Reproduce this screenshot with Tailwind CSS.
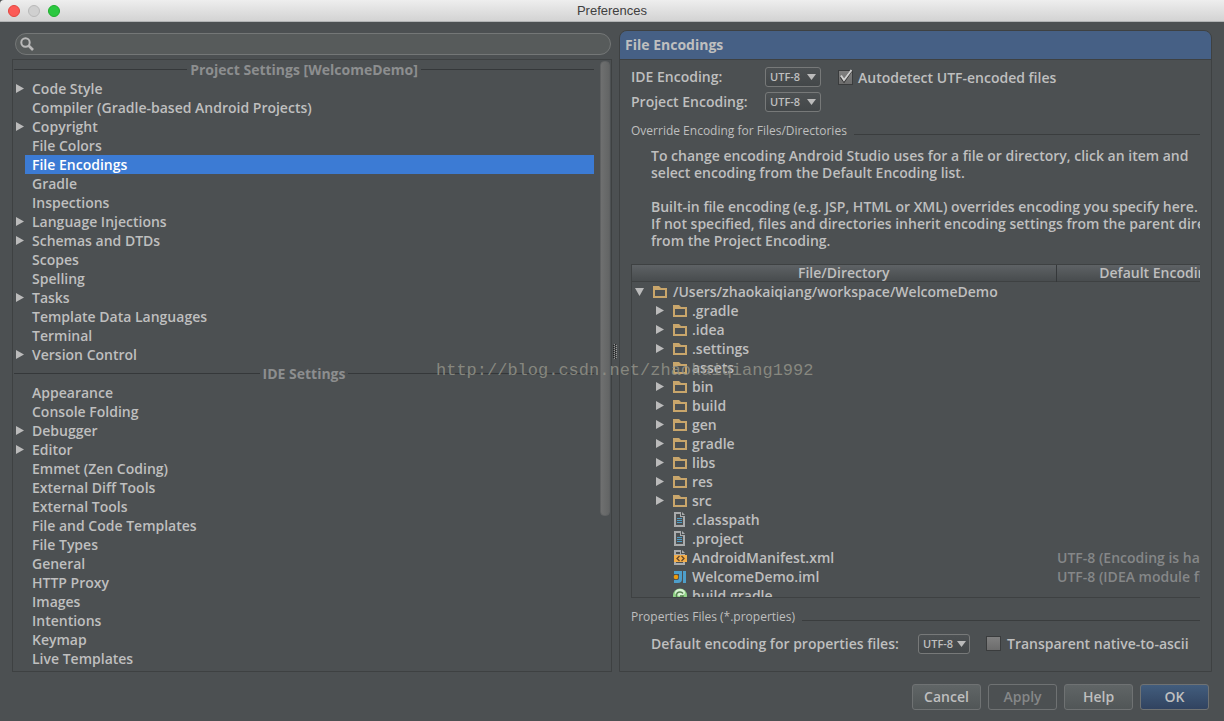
<!DOCTYPE html>
<html lang="en">
<head>
    <meta charset="UTF-8">
    <meta name="viewport" content="width=device-width, initial-scale=1.0">
    <title>Preferences</title>
    <script src="https://cdn.jsdelivr.net/npm/@tailwindcss/browser@4"></script>
</head>
<body class="bg-[#4c5052] text-[#bfbfbf] font-['Open_Sans','Noto_Sans',sans-serif] text-[14px] font-semibold">

    <!-- Shared icons -->
    <svg class="hidden">
        <symbol id="arrow-right" viewBox="0 0 8 9"><path d="M0 0L8 4.5L0 9Z" fill="#bbb"/></symbol>
        <symbol id="arrow-down" viewBox="0 0 9 8"><path d="M0 0H9L4.5 8Z" fill="#bbb"/></symbol>
        <symbol id="folder" viewBox="0 0 14 12"><path fill="#c9a66b" fill-rule="evenodd" d="M0 0H6L8 2H14V12H0ZM2 4V10H12V4Z"/></symbol>
        <symbol id="file" viewBox="0 0 14 15">
            <path fill="#a9abac" fill-rule="evenodd" d="M1 0H8V4H12V15H1ZM3 2V13H10V5H7V2Z"/>
            <path fill="#a9abac" d="M9 0L12 3H9Z"/>
            <path stroke="#4f9cc4" d="M4 6.5H9M4 8.5H9M4 10.5H9"/>
        </symbol>
        <symbol id="xml" viewBox="0 0 14 15">
            <path fill="#a9abac" d="M1 0H8V4H12V5H1ZM1 12H12V15H1Z"/>
            <path fill="#4c5052" d="M3 2H7V4H3ZM3 12H10V13H3Z"/>
            <path fill="#a9abac" d="M9 0L12 3H9Z"/>
            <path fill="#f4ae49" d="M1 5H14V12H1Z"/>
            <path fill="none" stroke="#62462a" stroke-width="1.3" d="M6.5 6L4 8.5L6.5 11M8.5 6L11 8.5L8.5 11"/>
        </symbol>
        <symbol id="module" viewBox="0 0 14 15">
            <path fill="#4e9fcb" d="M1 2H9V10Q9 14 5 14H1V11H4Q6 11 6 9V5H1ZM10 2H13V14H10Z"/>
            <circle cx="3" cy="8" r="2.3" fill="#ec9b0d"/>
        </symbol>
        <symbol id="gradle" viewBox="0 0 14 15">
            <circle cx="7" cy="7.5" r="7" fill="#93d689"/>
            <ellipse cx="7" cy="4.5" rx="5" ry="3.5" fill="#d8f2d3"/>
            <path fill="none" stroke="#55804f" stroke-width="1.5" d="M10 5.5Q9 4 7 4Q3.500 4 3.500 7.500Q3.500 11 7 11Q10 11 10 8H7"/>
        </symbol>
    </svg>

    <div class="h-screen flex flex-col overflow-hidden">
        <!-- Title bar -->
        <header class="relative h-[22px] shrink-0 flex items-center px-2 gap-2 bg-linear-to-b from-[#eeeeee] to-[#d3d3d3] border-b border-[#b1b3b4] rounded-tl-sm">
            <button aria-label="Close" class="size-3 rounded-full bg-[#fc5b57] border border-[#e2463f]"></button>
            <button aria-label="Minimize" class="size-3 rounded-full bg-[#d0d0d0] border border-[#b9b9b9]"></button>
            <button aria-label="Zoom" class="size-3 rounded-full bg-[#2bc840] border border-[#1dae2c]"></button>
            <h1 class="absolute inset-x-0 text-center text-[13px] font-normal text-[#404040] font-['Liberation_Sans',sans-serif] pointer-events-none">Preferences</h1>
        </header>

        <main class="flex-1 min-h-0 flex pt-2 pl-3 pr-3">
            <!-- Settings tree -->
            <section class="flex-1 min-w-0 flex flex-col">
                <label class="mt-[3px] ml-[3px] mr-px mb-1 h-[22px] shrink-0 flex items-center gap-1 pl-1 rounded-full border border-[#747777] bg-[#575b5b]">
                    <svg class="size-[14px] shrink-0" viewBox="0 0 14 14" fill="none" stroke="#b9b9b9"><circle cx="5.500" cy="5.500" r="4.200" stroke-width="2"/><path d="M8.500 8.500L13 13" stroke-width="2.600"/></svg>
                    <input type="text" aria-label="Search settings" class="flex-1 min-w-0 bg-transparent outline-none">
                </label>
                <div class="flex-1 min-h-0 flex border border-[#3e4142] overflow-hidden">
                    <ul id="settings" class="flex-1 min-w-0 pl-px"></ul>
                    <div class="w-[11px] ml-[6px] pt-px shrink-0">
                        <div class="w-[10px] h-[455px] rounded-sm bg-linear-to-r from-[#6f7070] to-[#636565] border border-[#5f6162]"></div>
                    </div>
                </div>
            </section>

            <!-- Splitter -->
            <div class="w-[7px] shrink-0 flex items-center justify-center">
                <svg class="w-[5px] h-[15px]" viewBox="0 0 5 15"><path stroke="#999" stroke-dasharray="1 1" d="M1.500 0V15M3.500 1V15"/><path stroke="#222" stroke-dasharray="1 1" d="M.5 1V15M2.500 0V15"/></svg>
            </div>

            <!-- Editor pane -->
            <section class="w-[593px] shrink-0 flex flex-col border border-[#3e4142] rounded-t-lg overflow-hidden">
                <h2 class="h-[29px] shrink-0 pl-[5px] leading-[27px] bg-[#466085] border-b border-[#3e4142] font-bold">File Encodings</h2>
                <div class="flex-1 min-h-0 flex flex-col pl-[11px] pr-[11px] whitespace-nowrap overflow-hidden">
                    <div class="flex mt-[7px] shrink-0">
                        <div class="grid grid-cols-[134px_56px] gap-y-[5px] items-center">
                            <label for="ide-encoding" class="leading-5">IDE Encoding:</label>
                            <div class="relative">
                                <select id="ide-encoding" class="appearance-none block w-full h-5 pl-1 text-[11px] leading-4 rounded-[3px] border border-[#777979] bg-linear-to-b from-[#4d5153] to-[#434749]"><option>UTF-8</option></select>
                                <svg class="absolute right-[5px] top-[7px] w-[9px] h-[6px] pointer-events-none" viewBox="0 0 9 6"><path d="M0 0H9L4.500 6Z" fill="#bbb"/></svg>
                            </div>
                            <label for="project-encoding" class="leading-5">Project Encoding:</label>
                            <div class="relative">
                                <select id="project-encoding" class="appearance-none block w-full h-5 pl-1 text-[11px] leading-4 rounded-[3px] border border-[#777979] bg-linear-to-b from-[#4d5153] to-[#434749]"><option>UTF-8</option></select>
                                <svg class="absolute right-[5px] top-[7px] w-[9px] h-[6px] pointer-events-none" viewBox="0 0 9 6"><path d="M0 0H9L4.500 6Z" fill="#bbb"/></svg>
                            </div>
                        </div>
                        <label class="ml-4 h-5 flex items-center gap-1">
                            <span class="grid">
                                <input type="checkbox" checked class="peer col-start-1 row-start-1 appearance-none size-[15px] m-px border border-[#3a3c3d] bg-linear-to-b from-[#808080] to-[#6c6c6c]">
                                <svg class="hidden peer-checked:block col-start-1 row-start-1 w-4 h-[15px] pointer-events-none" viewBox="0 0 16 15" fill="none"><path d="M4 8L7 12L14 2" stroke="#333" stroke-width="2.500"/><path d="M4 6.500L7 11L14.500 1" stroke="#d0d0d0" stroke-width="2"/></svg>
                            </span>
                            Autodetect UTF-encoded files
                        </label>
                    </div>

                    <fieldset class="mt-[9px] flex-1 min-h-0 min-w-0 flex flex-col">
                        <div class="h-5 shrink-0 flex items-center gap-[7px] text-[12px] font-medium"><span>Override Encoding for Files/Directories</span><span class="flex-1 h-px mt-[6px] bg-[#3a3d3e]"></span></div>
                        <p class="mt-[6px] ml-5 leading-[17px] overflow-hidden shrink-0">
                            To change encoding Android Studio uses for a file or directory, click an item and<br>
                            select encoding from the Default Encoding list.<br><br>
                            Built-in file encoding (e.g. JSP, HTML or XML) overrides encoding you specify here.<br>
                            If not specified, files and directories inherit encoding settings from the parent directory or<br>
                            from the Project Encoding.
                        </p>
                        <div class="mt-[15px] flex-1 min-h-0 border-y border-l border-[#3e4142] overflow-hidden">
                            <table class="table-fixed w-[625px] border-collapse">
                                <colgroup><col class="w-[424px]"><col></colgroup>
                                <thead>
                                    <tr class="h-4 bg-linear-to-b from-[#5e6265] to-[#484c4e] leading-4 border-b border-[#3e4142]">
                                        <th class="font-semibold border-r border-[#35383a]">File/Directory</th>
                                        <th class="font-semibold">Default Encoding</th>
                                    </tr>
                                </thead>
                                <tbody id="files"></tbody>
                            </table>
                        </div>
                    </fieldset>

                    <fieldset class="mt-[9px] mb-[17px] shrink-0">
                        <div class="h-5 flex items-center gap-[7px] text-[12px] font-medium"><span>Properties Files (*.properties)</span><span class="flex-1 h-px mt-[6px] bg-[#3a3d3e]"></span></div>
                        <div class="mt-[6px] ml-5 flex items-center">
                            <label for="properties-encoding" class="w-[267px]">Default encoding for properties files:</label>
                            <div class="relative w-[52px]">
                                <select id="properties-encoding" class="appearance-none block w-full h-5 pl-1 text-[11px] leading-4 rounded-[3px] border border-[#777979] bg-linear-to-b from-[#4d5153] to-[#434749]"><option>UTF-8</option></select>
                                <svg class="absolute right-1 top-[7px] w-[9px] h-[6px] pointer-events-none" viewBox="0 0 9 6"><path d="M0 0H9L4.500 6Z" fill="#bbb"/></svg>
                            </div>
                            <label class="ml-4 flex items-center gap-[6px]">
                                <input type="checkbox" class="appearance-none size-[15px] border border-[#3a3c3d] bg-linear-to-b from-[#808080] to-[#6c6c6c]">
                                Transparent native-to-ascii
                            </label>
                        </div>
                    </fieldset>
                </div>
            </section>
        </main>

        <!-- Dialog buttons -->
        <footer class="shrink-0 flex justify-end gap-[7px] pt-3 pr-[15px] pb-[11px] leading-6">
            <button class="w-[69px] h-[26px] rounded-[3px] border border-[#6f7273] bg-linear-to-b from-[#606566] to-[#515657]">Cancel</button>
            <button disabled class="w-[69px] h-[26px] rounded-[3px] border border-[#6f7273] text-[#858788]">Apply</button>
            <button class="w-[69px] h-[26px] rounded-[3px] border border-[#6f7273] bg-linear-to-b from-[#606566] to-[#515657]">Help</button>
            <button class="w-[69px] h-[26px] rounded-[3px] border border-[#6f7273] bg-linear-to-b from-[#425d7d] to-[#314360]">OK</button>
        </footer>
    </div>

    <div class="absolute left-[436px] top-[359px] text-[17px] leading-6 font-normal text-[#929288]/85 font-['Liberation_Mono',monospace] pointer-events-none">http://blog.csdn.net/zhaokaiqiang1992</div>

    <script>
        // '#' = group title, '>' = expandable, '*' = selected
        const settings = [
            '#Project Settings [WelcomeDemo]', '>Code Style', 'Compiler (Gradle-based Android Projects)', '>Copyright',
            'File Colors', '*File Encodings', 'Gradle', 'Inspections', '>Language Injections', '>Schemas and DTDs',
            'Scopes', 'Spelling', '>Tasks', 'Template Data Languages', 'Terminal', '>Version Control',
            '#IDE Settings', 'Appearance', 'Console Folding', '>Debugger', '>Editor', 'Emmet (Zen Coding)',
            'External Diff Tools', 'External Tools', 'File and Code Templates', 'File Types', 'General', 'HTTP Proxy',
            'Images', 'Intentions', 'Keymap', 'Live Templates'
        ];
        document.getElementById('settings').innerHTML = settings.map(s => {
            const name = s.replace(/^[#>*]/, '');
            if (s[0] === '#') {
                return `<li class="h-[19px] flex items-center gap-[3px] font-bold text-[#8c8e8f]"><span class="flex-1 h-px bg-[#35383a]"></span>${name}<span class="flex-1 h-px bg-[#35383a]"></span></li>`;
            }
            const arrow = s[0] === '>' ? '<svg class="w-2 h-[9px]"><use href="#arrow-right"/></svg>' : '';
            const row = s[0] === '*' ? 'flex-1 pl-[7px] leading-[19px] bg-[#3c7bd4] text-white' : 'flex-1 pl-[7px] leading-[19px]';
            return `<li class="h-[19px] flex items-center"><span class="w-[11px] pl-[2px]">${arrow}</span><span class="${row}">${name}</span></li>`;
        }).join('');

        const files = [
            ['.gradle', 'folder', 1], ['.idea', 'folder', 1], ['.settings', 'folder', 1], ['assets', 'folder', 0],
            ['bin', 'folder', 1], ['build', 'folder', 1], ['gen', 'folder', 1], ['gradle', 'folder', 1],
            ['libs', 'folder', 1], ['res', 'folder', 1], ['src', 'folder', 1], ['.classpath', 'file', 0],
            ['.project', 'file', 0], ['AndroidManifest.xml', 'xml', 0, 'UTF-8 (Encoding is hard-coded)'],
            ['WelcomeDemo.iml', 'module', 0, 'UTF-8 (IDEA module file)'], ['build.gradle', 'gradle', 0]
        ];
        const rootRow = `<tr class="h-[19px] leading-[19px]"><td><div class="flex items-center pl-[3px]"><svg class="w-[9px] h-2 mr-[9px]"><use href="#arrow-down"/></svg><svg class="w-[14px] h-3 mr-[6px]"><use href="#folder"/></svg>/Users/zhaokaiqiang/workspace/WelcomeDemo</div></td><td></td></tr>`;
        document.getElementById('files').innerHTML = rootRow + files.map(([name, icon, open, note]) => {
            const arrow = open ? '<svg class="w-2 h-[9px]"><use href="#arrow-right"/></svg>' : '';
            const size = icon === 'folder' ? 'w-[14px] h-3 mr-[5px]' : 'w-[14px] h-[15px] mr-[5px]';
            return `<tr class="h-[19px] leading-[19px]"><td><div class="flex items-center pl-6"><span class="w-[17px]">${arrow}</span><svg class="${size}"><use href="#${icon}"/></svg>${name}</div></td><td class="pl-px text-[#858788]">${note || ''}</td></tr>`;
        }).join('');
    </script>
</body>
</html>
